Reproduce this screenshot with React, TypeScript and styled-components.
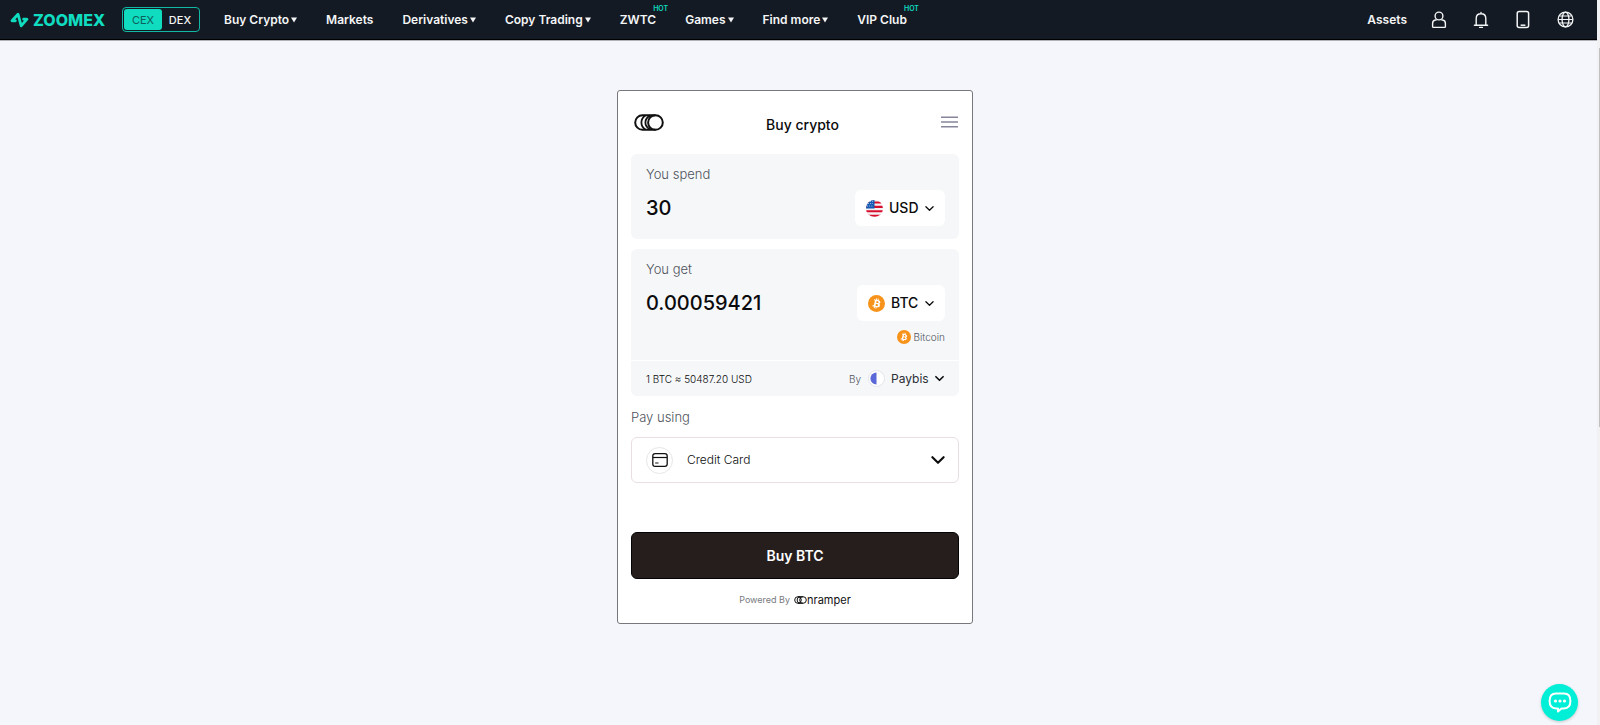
import React from 'react';
import styled, { createGlobalStyle } from 'styled-components';

const GlobalStyle = createGlobalStyle`
  *, *::before, *::after { box-sizing: border-box; }
  body {
    margin: 0;
    background: #f5f6fb;
    font-family: Inter, "Liberation Sans", sans-serif;
    color: #0b0b0d;
  }
  button, input, select { font: inherit; color: inherit; margin: 0; }
  button { cursor: pointer; }
  svg { display: block; flex: none; }
`;

const Page = styled.div`
  min-height: 100vh;
  display: flex;
  flex-direction: column;
`;

const TopBar = styled.header`
  display: flex;
  align-items: center;
  height: 40px;
  margin-right: 3px;
  padding: 0 22px 0 10px;
  background: #131a23;
  border-bottom: 1px solid #000;
  box-shadow: 0 1px 0 #b0b2b6;
  color: #f4f5f6;
`;

const Brand = styled.a`
  display: flex;
  align-items: center;
  gap: 4px;
  width: 112px;
  color: #10dcc0;
  text-decoration: none;
`;

const Wordmark = styled.span`
  font-size: 16px;
  line-height: 20px;
  font-weight: 800;
`;

const ModeSwitch = styled.div`
  display: flex;
  height: 25px;
  width: 78px;
  padding: 1px;
  border: 1px solid #12b8a3;
  border-radius: 4px;
`;

const ModeButton = styled.button<{ $active?: boolean }>`
  width: ${(p) => (p.$active ? 38 : 36)}px;
  padding: 0;
  border: 0;
  border-radius: 3px;
  font-size: 11px;
  line-height: 20px;
  font-weight: ${(p) => (p.$active ? 400 : 500)};
  background: ${(p) => (p.$active ? '#10dcc0' : 'transparent')};
  color: ${(p) => (p.$active ? '#0d5f5b' : '#f4f5f6')};
`;

const Nav = styled.nav`
  display: flex;
  align-items: center;
  gap: 29px;
  margin-left: 24px;
`;

const NavLink = styled.a`
  position: relative;
  display: flex;
  align-items: center;
  gap: 2px;
  font-size: 12px;
  line-height: 20px;
  font-weight: 600;
  white-space: nowrap;
  color: inherit;
  text-decoration: none;
`;

const HotBadge = styled.span`
  position: absolute;
  top: -5px;
  right: -12px;
  font-size: 7px;
  line-height: 8px;
  font-weight: 600;
  color: #10dcc0;
`;

const Tools = styled.div`
  display: flex;
  align-items: center;
  gap: 22px;
  margin-left: auto;
`;

const IconButton = styled.button`
  display: flex;
  align-items: center;
  justify-content: center;
  min-width: 20px;
  height: 20px;
  padding: 0;
  border: 0;
  background: none;
`;

const MenuButton = styled(IconButton)`
  min-width: 17px;
  height: 16px;
`;

const Main = styled.main`
  flex: 1;
  display: flex;
  justify-content: center;
  align-items: flex-start;
  padding: 50px 10px 50px 0;
`;

const Widget = styled.section`
  width: 356px;
  padding: 23px 13px 13px;
  background: #fff;
  border: 1px solid #77787c;
  border-radius: 3px;
`;

const WidgetHead = styled.div`
  display: flex;
  justify-content: space-between;
  align-items: flex-start;
  height: 40px;
  padding: 0 1px 0 3px;
`;

const Title = styled.h1`
  margin: 0;
  padding-top: 1px;
  font-size: 14px;
  line-height: 20px;
  font-weight: 500;
`;

const Panel = styled.div`
  margin-bottom: 10px;
  background: #f6f7f9;
  border-radius: 6px;
`;

const PanelBody = styled.div`
  padding: 10px 14px 13px 15px;
`;

const FieldLabel = styled.label`
  display: block;
  font-size: 13px;
  line-height: 20px;
  font-weight: 300;
  color: #4e535b;
`;

const AmountRow = styled.div`
  display: flex;
  justify-content: space-between;
  align-items: center;
  margin-top: 6px;
`;

const AmountInput = styled.input`
  flex: 1;
  min-width: 0;
  height: 36px;
  padding: 0;
  border: 0;
  outline: 0;
  background: none;
  font-size: 20px;
  line-height: 24px;
  font-weight: 500;
`;

const CurrencyPicker = styled.div`
  display: flex;
  align-items: center;
  gap: 6px;
  height: 36px;
  padding: 0 11px 0 11px;
  background: #fff;
  border-radius: 6px;
`;

const PlainSelect = styled.select<{ $size: number; $weight: number }>`
  appearance: none;
  padding: 0;
  border: 0;
  outline: 0;
  background: none;
  font-size: ${(p) => p.$size}px;
  line-height: 20px;
  font-weight: ${(p) => p.$weight};
`;

const NetworkRow = styled.div`
  display: flex;
  justify-content: flex-end;
  align-items: center;
  gap: 3px;
  margin-top: 6px;
  font-size: 10px;
  line-height: 20px;
  font-weight: 300;
  color: #4e535b;
`;

const RateRow = styled.div`
  display: flex;
  align-items: center;
  height: 36px;
  padding: 0 15px;
  border-top: 1px solid #fff;
  font-size: 10px;
  line-height: 20px;
  font-weight: 300;
  color: #0b0b0d;
`;

const ByLabel = styled.label`
  margin-right: 7px;
  margin-left: auto;
  font-size: 10px;
  color: #4e535b;
`;

const Provider = styled.div`
  display: flex;
  align-items: center;
  gap: 6px;
  color: #2c2f35;
`;

const PaymentField = styled.div`
  padding-top: 1px;
`;

const PaymentBox = styled.div`
  display: flex;
  align-items: center;
  height: 46px;
  margin-top: 10px;
  padding: 0 13px 0 14px;
  border: 1px solid #e9dfe2;
  border-radius: 6px;
`;

const CardBadge = styled.span`
  display: flex;
  align-items: center;
  justify-content: center;
  width: 27px;
  height: 27px;
  margin-right: 14px;
  border: 1px solid #e6e6e9;
  border-radius: 50%;
`;

const PaymentSelect = styled(PlainSelect)`
  flex: 1;
`;

const BuyButton = styled.button`
  display: block;
  width: 100%;
  height: 47px;
  margin-top: 49px;
  padding: 0;
  border: 1px solid #050303;
  border-radius: 6px;
  background: #261e1d;
  color: #fff;
  font-size: 14px;
  line-height: 20px;
  font-weight: 600;
`;

const Powered = styled.footer`
  display: flex;
  justify-content: center;
  align-items: center;
  gap: 4px;
  margin-top: 11px;
  font-size: 9px;
  line-height: 20px;
  color: #777a80;
`;

const OnramperMark = styled.a`
  display: flex;
  align-items: center;
  color: #111;
  font-size: 11px;
  line-height: 16px;
  font-weight: 400;
  text-decoration: none;
`;

const ChatButton = styled.button`
  position: fixed;
  right: 22px;
  bottom: 4px;
  display: flex;
  align-items: center;
  justify-content: center;
  width: 37px;
  height: 37px;
  padding: 0;
  border: 0;
  border-radius: 50%;
  background: #00efd6;
  box-shadow: 0 1px 3px rgba(0, 0, 0, 0.2);
`;

const ScrollTrack = styled.div`
  position: fixed;
  top: 0;
  right: 0;
  bottom: 0;
  width: 3px;
  padding: 48px 0 0 2px;
  background: #f1f1f3;
`;

const ScrollThumb = styled.div`
  height: 56%;
  background: #c1c1c3;
`;

const Caret = () => (
  <svg width="6" height="6" viewBox="0 0 6 6" aria-hidden="true">
    <path d="M0 0.5H6L3 5.5Z" fill="currentColor" />
  </svg>
);

const Chevron = ({ width, stroke }: { width: number; stroke: number }) => (
  <svg width={width} height={width} viewBox="0 0 10 10" fill="none" aria-hidden="true">
    <path d="M1 3L5 7L9 3" stroke="#0b0b0d" strokeWidth={stroke} strokeLinecap="round" strokeLinejoin="round" />
  </svg>
);

const ZoomexIcon = () => (
  <svg width="19" height="18" viewBox="0 0 19 18" fill="none" aria-hidden="true">
    <path
      d="M5.4 9.8H2L8 3.2L11.2 14.8L17 8.200H13.6"
      stroke="currentColor"
      strokeWidth="2.800"
      strokeLinejoin="round"
      strokeLinecap="round"
    />
  </svg>
);

const PersonIcon = () => (
  <svg width="16" height="18" viewBox="0 0 16 18" fill="none" stroke="currentColor" strokeWidth="1.4">
    <circle cx="8" cy="5" r="3.9" />
    <path d="M5.6 9H4.4Q1.6 9.4 1.6 12.5V15.6Q1.6 16.4 2.4 16.4H13.6Q14.4 16.4 14.4 15.6V12.5Q14.4 9.4 11.6 9H10.4" />
  </svg>
);

const BellIcon = () => (
  <svg width="16" height="18" viewBox="0 0 16 18" fill="none" stroke="currentColor" strokeWidth="1.4" strokeLinecap="round">
    <path d="M8 1.4V2.6M3.2 14V7.4Q3.2 2.8 8 2.8Q12.8 2.8 12.8 7.4V14M1.4 14.2H14.6M6.6 16.4H9.4" />
  </svg>
);

const PhoneIcon = () => (
  <svg width="14" height="19" viewBox="0 0 14 19" fill="none" stroke="currentColor" strokeWidth="1.5">
    <rect x="1.2" y="1.4" width="11.4" height="16.2" rx="2" />
    <path d="M4.6 15.2H9.4" />
  </svg>
);

const GlobeIcon = () => (
  <svg width="17" height="17" viewBox="0 0 17 17" fill="none" stroke="currentColor" strokeWidth="1.3">
    <circle cx="8.5" cy="8.5" r="7.4" />
    <ellipse cx="8.5" cy="8.5" rx="3.4" ry="7.4" />
    <path d="M1.4 8.5H15.6M2.6 5H14.4M2.6 12H14.4" strokeWidth="1.1" />
  </svg>
);

const CoinsMark = () => (
  <svg width="30" height="17" viewBox="0 0 30 17" fill="none" stroke="#111" strokeWidth="2" aria-hidden="true">
    <rect x="1.2" y="1.2" width="27.6" height="14.6" rx="7.3" />
    <path d="M21.4 1.2A7.3 7.3 0 0 0 21.4 15.8" />
    <path d="M11.400 1.4Q7.4 4 7.4 8.5T11.400 15.6M16.400 1.4Q11.400 4 11.400 8.5T16.400 15.6" strokeWidth="1.8" />
  </svg>
);

const MenuIcon = () => (
  <svg width="17" height="12" viewBox="0 0 17 12" stroke="#85869a" strokeWidth="1.4">
    <path d="M0 1.2H17M0 6H17M0 10.8H17" />
  </svg>
);

const FlagIcon = () => (
  <svg width="17" height="17" viewBox="0 0 17 17" aria-hidden="true">
    <clipPath id="flag-round"><circle cx="8.5" cy="8.5" r="8.5" /></clipPath>
    <g clipPath="url(#flag-round)">
      <rect width="17" height="17" fill="#f3f1f3" />
      <path d="M0 2.500H17M0 6.900H17M0 11.300H17M0 15.700H17" stroke="#d80f2c" strokeWidth="2.1" />
      <rect width="8.5" height="8.5" fill="#1458b4" />
      <path d="M2 3.5H7M1 6H7.6M4 1.4H7.6" stroke="#c9dcf3" strokeWidth="0.8" strokeDasharray="1 1.2" />
    </g>
  </svg>
);

const BitcoinIcon = ({ size }: { size: number }) => (
  <svg width={size} height={size} viewBox="0 0 32 32" aria-hidden="true">
    <circle cx="16" cy="16" r="16" fill="#f7931a" />
    <path
      fill="#fff"
      d="M23.2 14c.3-2.1-1.3-3.200-3.500-4l.7-2.800-1.700-.4-.7 2.700-1.400-.3.700-2.700-1.700-.4-.7 2.800-3.400-.9-.5 1.800s1.300.3 1.200.3c.7.2.8.6.8 1l-2 7.800c-.1.200-.3.500-.8.400l-1.200-.3-.9 2 3.300.8-.7 2.800 1.700.4.7-2.800 1.400.4-.7 2.700 1.700.4.7-2.800c2.900.6 5.100.3 6-2.300.8-2.100 0-3.300-1.500-4.100 1.100-.3 1.900-1 2.500-2.500zm-3.900 5.500c-.5 2.100-4.100 1-5.200.7l.9-3.800c1.200.3 4.900.9 4.300 3.100zm.5-5.500c-.5 1.900-3.400.9-4.400.7l.9-3.400c1 .2 4 .7 3.500 2.700z"
    />
  </svg>
);

const PaybisIcon = () => (
  <svg width="17" height="17" viewBox="0 0 17 17" aria-hidden="true">
    <circle cx="8.5" cy="8.5" r="8" fill="#fff" stroke="#e4e5ea" />
    <path d="M8.500 2.400A6.100 6.100 0 0 0 8.500 14.600Z" fill="#5a68d8" />
  </svg>
);

const CardIcon = () => (
  <svg width="16" height="14" viewBox="0 0 16 14" fill="none" stroke="#111" aria-hidden="true">
    <rect x="0.8" y="0.7" width="14.400" height="12.600" rx="2.400" strokeWidth="1.300" />
    <path d="M1 4.500H15" strokeWidth="1.200" />
    <path d="M3.200 10H6.500" strokeWidth="1" />
  </svg>
);

const OnramperCoins = () => (
  <svg width="13" height="8" viewBox="0 0 13 8" fill="none" stroke="#111" strokeWidth="1" aria-hidden="true">
    <circle cx="4" cy="4" r="3.300" />
    <path d="M6.400 .7A3.300 3.300 0 0 0 6.400 7.300M4 .7H9M4 7.300H9" />
    <circle cx="9" cy="4" r="3.300" />
  </svg>
);

const ChatIcon = () => (
  <svg width="24" height="22" viewBox="0 0 24 22" fill="none" aria-hidden="true">
    <path
      d="M8 1.600H16Q22.400 1.600 22.400 9T16 16.400H13.500L10 19.500V16.400H8Q1.600 16.400 1.600 9T8 1.600Z"
      stroke="#fff"
      strokeWidth="2"
      strokeLinejoin="round"
    />
    <circle cx="7.500" cy="9" r="1.600" fill="#fff" />
    <circle cx="12" cy="9" r="1.600" fill="#fff" />
    <circle cx="16.500" cy="9" r="1.600" fill="#fff" />
  </svg>
);

const navItems = [
  { label: 'Buy Crypto', menu: true },
  { label: 'Markets' },
  { label: 'Derivatives', menu: true },
  { label: 'Copy Trading', menu: true },
  { label: 'ZWTC', hot: true },
  { label: 'Games', menu: true },
  { label: 'Find more', menu: true },
  { label: 'VIP Club', hot: true },
];

export default function App() {
  return (
    <Page>
      <GlobalStyle />
      <TopBar>
        <Brand href="#">
          <ZoomexIcon />
          <Wordmark>ZOOMEX</Wordmark>
        </Brand>
        <ModeSwitch>
          <ModeButton $active>CEX</ModeButton>
          <ModeButton>DEX</ModeButton>
        </ModeSwitch>
        <Nav>
          {navItems.map((item) => (
            <NavLink key={item.label} href="#">
              {item.label}
              {item.menu && <Caret />}
              {item.hot && <HotBadge>HOT</HotBadge>}
            </NavLink>
          ))}
        </Nav>
        <Tools>
          <NavLink href="#">Assets</NavLink>
          <IconButton aria-label="Account"><PersonIcon /></IconButton>
          <IconButton aria-label="Notifications"><BellIcon /></IconButton>
          <IconButton aria-label="Mobile app"><PhoneIcon /></IconButton>
          <IconButton aria-label="Language"><GlobeIcon /></IconButton>
        </Tools>
      </TopBar>

      <Main>
        <Widget>
          <WidgetHead>
            <CoinsMark />
            <Title>Buy crypto</Title>
            <MenuButton aria-label="Menu"><MenuIcon /></MenuButton>
          </WidgetHead>

          <Panel>
            <PanelBody>
              <FieldLabel htmlFor="spend">You spend</FieldLabel>
              <AmountRow>
                <AmountInput id="spend" defaultValue="30" />
                <CurrencyPicker>
                  <FlagIcon />
                  <PlainSelect $size={14} $weight={500} aria-label="Currency to spend">
                    <option>USD</option>
                  </PlainSelect>
                  <Chevron width={9} stroke={1.4} />
                </CurrencyPicker>
              </AmountRow>
            </PanelBody>
          </Panel>

          <Panel>
            <PanelBody>
              <FieldLabel htmlFor="get">You get</FieldLabel>
              <AmountRow>
                <AmountInput id="get" defaultValue="0.00059421" />
                <CurrencyPicker>
                  <BitcoinIcon size={17} />
                  <PlainSelect $size={14} $weight={500} aria-label="Currency to get">
                    <option>BTC</option>
                  </PlainSelect>
                  <Chevron width={9} stroke={1.4} />
                </CurrencyPicker>
              </AmountRow>
              <NetworkRow>
                <BitcoinIcon size={14} />
                Bitcoin
              </NetworkRow>
            </PanelBody>
            <RateRow>
              <span>1 BTC ≈ 50487.20 USD</span>
              <ByLabel htmlFor="provider">By</ByLabel>
              <Provider>
                <PaybisIcon />
                <PlainSelect id="provider" $size={12} $weight={400}>
                  <option>Paybis</option>
                </PlainSelect>
                <Chevron width={9} stroke={1.8} />
              </Provider>
            </RateRow>
          </Panel>

          <PaymentField>
            <FieldLabel htmlFor="payment">Pay using</FieldLabel>
            <PaymentBox>
              <CardBadge><CardIcon /></CardBadge>
              <PaymentSelect id="payment" $size={12} $weight={300}>
                <option>Credit Card</option>
              </PaymentSelect>
              <Chevron width={14} stroke={1.5} />
            </PaymentBox>
          </PaymentField>

          <BuyButton>Buy BTC</BuyButton>

          <Powered>
            Powered By
            <OnramperMark href="#">
              <OnramperCoins />
              nramper
            </OnramperMark>
          </Powered>
        </Widget>
      </Main>

      <ChatButton aria-label="Open chat"><ChatIcon /></ChatButton>
      <ScrollTrack><ScrollThumb /></ScrollTrack>
    </Page>
  );
}
